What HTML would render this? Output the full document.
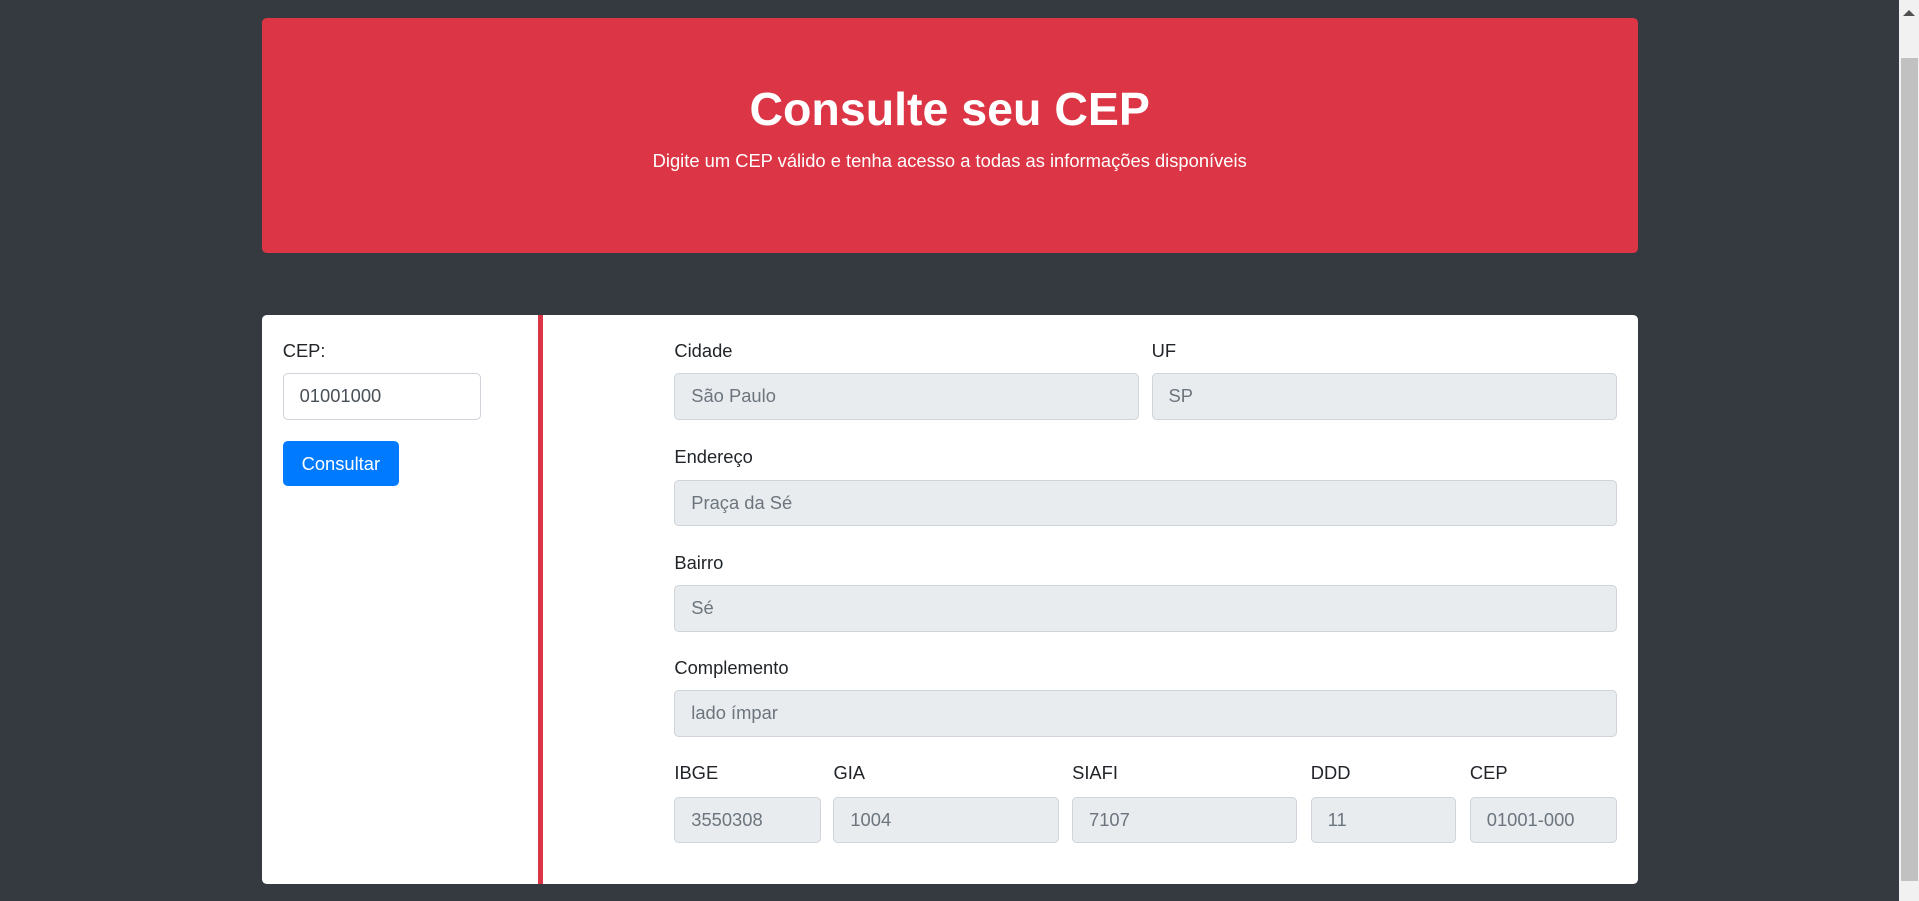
<!DOCTYPE html>
<html><head><meta charset="utf-8"><style>
html,body{margin:0;padding:0;width:1919px;height:901px;overflow:hidden;background:#343a40;}
#z{zoom:1.22386;position:relative;width:1568px;height:736px;font-family:"Liberation Sans",sans-serif;color:#212529;font-size:15px;}
.a{position:absolute;}
.jum{left:214px;top:15px;width:1124px;height:192px;background:#dc3545;border-radius:4px;color:#fff;text-align:center;}
.jum h1{margin:0;position:absolute;top:50px;left:0;right:0;font-size:38px;font-weight:bold;line-height:48px;}
.jum p{margin:0;position:absolute;top:106px;left:0;right:0;font-size:15px;line-height:22px;}
.card{left:214px;top:257px;width:1124px;height:465px;background:#fff;border-radius:4px;}
.lbl{font-size:15px;line-height:20px;color:#212529;}
.inp{box-sizing:border-box;height:38px;border:1px solid #ced4da;border-radius:4px;background:#e9ecef;color:#6c757d;padding:0 13px;line-height:36px;font-size:15px;}
.w{background:#fff;color:#495057;}
.btn{left:231px;top:360px;width:95px;height:37px;background:#007bff;border-radius:4px;color:#fff;text-align:center;line-height:37px;font-size:15px;}
.bar{left:440px;top:257px;width:4px;height:465px;background:#dc3545;}
.sb{left:1552px;top:0;width:16px;height:736px;background:#f1f1f1;}
.th{left:1553px;top:47px;width:14px;height:673px;background:#c1c1c1;}
</style></head><body><div id="z">
<div class="a jum"><h1>Consulte seu CEP</h1><p>Digite um CEP válido e tenha acesso a todas as informações disponíveis</p></div>
<div class="a card"></div>
<div class="a bar"></div>
<div class="a lbl" style="left:231px;top:277px">CEP:</div>
<div class="a inp w" style="left:231px;top:305px;width:162px">01001000</div>
<div class="a btn">Consultar</div>

<div class="a lbl" style="left:551px;top:277px">Cidade</div>
<div class="a inp" style="left:551px;top:305px;width:380px">São Paulo</div>
<div class="a lbl" style="left:941px;top:277px">UF</div>
<div class="a inp" style="left:941px;top:305px;width:380px">SP</div>

<div class="a lbl" style="left:551px;top:364px">Endereço</div>
<div class="a inp" style="left:551px;top:392px;width:770px">Praça da Sé</div>

<div class="a lbl" style="left:551px;top:450px">Bairro</div>
<div class="a inp" style="left:551px;top:478px;width:770px">Sé</div>

<div class="a lbl" style="left:551px;top:536px">Complemento</div>
<div class="a inp" style="left:551px;top:564px;width:770px">lado ímpar</div>

<div class="a lbl" style="left:551px;top:622px">IBGE</div>
<div class="a inp" style="left:551px;top:651px;width:120px">3550308</div>
<div class="a lbl" style="left:681px;top:622px">GIA</div>
<div class="a inp" style="left:681px;top:651px;width:184px">1004</div>
<div class="a lbl" style="left:876px;top:622px">SIAFI</div>
<div class="a inp" style="left:876px;top:651px;width:184px">7107</div>
<div class="a lbl" style="left:1071px;top:622px">DDD</div>
<div class="a inp" style="left:1071px;top:651px;width:119px">11</div>
<div class="a lbl" style="left:1201px;top:622px">CEP</div>
<div class="a inp" style="left:1201px;top:651px;width:120px">01001-000</div>

<div class="a sb"></div>
<div class="a th"></div>
<div class="a" style="left:1555px;top:8px;width:0;height:0;border-left:5px solid transparent;border-right:5px solid transparent;border-bottom:5px solid #505050"></div>
</div></body></html>
